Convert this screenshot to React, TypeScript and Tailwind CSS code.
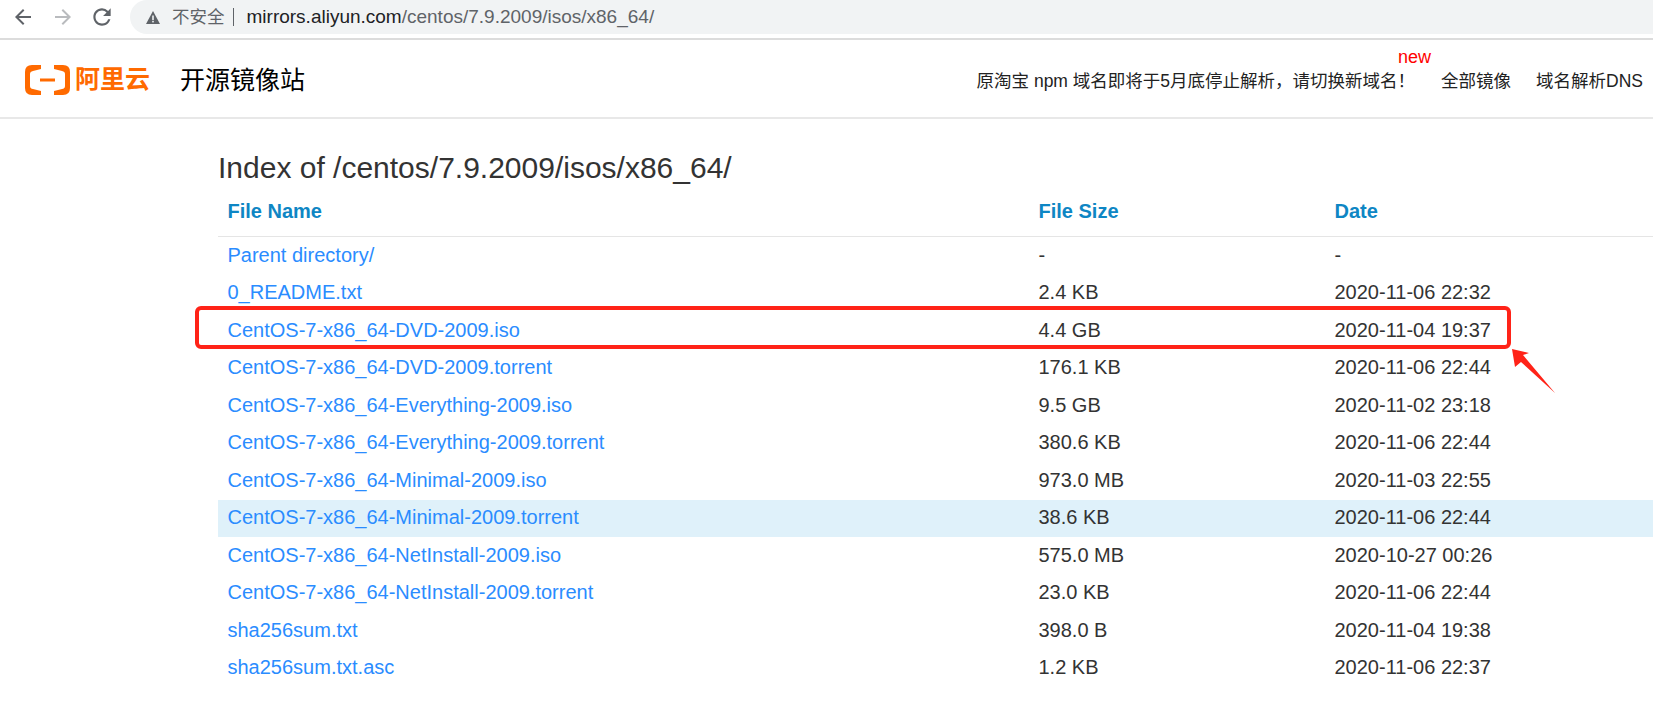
const files = [
  { name: "Parent directory/", size: "-", date: "-" },
  { name: "0_README.txt", size: "2.4 KB", date: "2020-11-06 22:32" },
  { name: "CentOS-7-x86_64-DVD-2009.iso", size: "4.4 GB", date: "2020-11-04 19:37" },
  { name: "CentOS-7-x86_64-DVD-2009.torrent", size: "176.1 KB", date: "2020-11-06 22:44" },
  { name: "CentOS-7-x86_64-Everything-2009.iso", size: "9.5 GB", date: "2020-11-02 23:18" },
  { name: "CentOS-7-x86_64-Everything-2009.torrent", size: "380.6 KB", date: "2020-11-06 22:44" },
  { name: "CentOS-7-x86_64-Minimal-2009.iso", size: "973.0 MB", date: "2020-11-03 22:55" },
  { name: "CentOS-7-x86_64-Minimal-2009.torrent", size: "38.6 KB", date: "2020-11-06 22:44", hover: true },
  { name: "CentOS-7-x86_64-NetInstall-2009.iso", size: "575.0 MB", date: "2020-10-27 00:26" },
  { name: "CentOS-7-x86_64-NetInstall-2009.torrent", size: "23.0 KB", date: "2020-11-06 22:44" },
  { name: "sha256sum.txt", size: "398.0 B", date: "2020-11-04 19:38" },
  { name: "sha256sum.txt.asc", size: "1.2 KB", date: "2020-11-06 22:37" },
];

function AliyunLogo() {
  return (
    <svg width="45" height="30" viewBox="0 0 45 30" className="shrink-0">
      <path d="M16 0H7Q0 0 0 7V23Q0 30 7 30H16V26L8 24Q5 23.500 5 21V9Q5 6.500 8 6L16 4Z" fill="#ff6a00" />
      <path d="M29 0H38Q45 0 45 7V23Q45 30 38 30H29V26L37 24Q40 23.500 40 21V9Q40 6.500 37 6L29 4Z" fill="#ff6a00" />
      <rect x="15" y="13.500" width="15" height="3" fill="#ff6a00" />
    </svg>
  );
}

export default function App() {
  return (
    <div className="h-[726px] w-[1653px] overflow-hidden bg-white font-['Liberation_Sans','Noto_Sans_CJK_SC',sans-serif]">
      {/* Browser toolbar */}
      <div className="flex h-[40px] items-start border-b-2 border-[#dcdcdc] bg-white">
        <div className="flex h-[33px] w-[130px] items-center pl-[11px]">
          <svg width="24" height="24" viewBox="0 0 24 24" fill="#5f6368">
            <path d="M20 11H7.830l5.590-5.590L12 4l-8 8 8 8 1.410-1.410L7.830 13H20v-2z" />
          </svg>
          <svg width="24" height="24" viewBox="0 0 24 24" fill="#b9bbbe" className="ml-[16px]">
            <path d="M4 11h12.170l-5.590-5.590L12 4l8 8-8 8-1.410-1.410L16.170 13H4v-2z" />
          </svg>
          <svg width="26" height="26" viewBox="0 0 24 24" fill="#5f6368" className="ml-[14px]">
            <path d="M17.650 6.350A7.958 7.958 0 0012 4c-4.420 0-7.990 3.580-7.990 8s3.570 8 7.990 8c3.730 0 6.840-2.550 7.730-6h-2.080A5.990 5.990 0 0112 18c-3.310 0-6-2.690-6-6s2.690-6 6-6c1.660 0 3.140.690 4.220 1.780L13 11h7V4l-2.350 2.350z" />
          </svg>
        </div>
        <div className="flex h-[34px] flex-1 items-center rounded-l-[17px] bg-[#f1f3f4] pl-[16px]">
          <svg width="14" height="13" viewBox="0 0 14 13" className="shrink-0">
            <path d="M7 0L14 13H0Z" fill="#5f6368" />
            <rect x="6.200" y="4.500" width="1.600" height="4.500" fill="#f1f3f4" />
            <rect x="6.200" y="9.800" width="1.600" height="1.600" fill="#f1f3f4" />
          </svg>
          <span className="ml-[12px] text-[17.5px] text-[#5f6368]">不安全</span>
          <span className="ml-[8px] h-[18px] w-px bg-[#5f6368]" />
          <span className="ml-[13px] text-[19px] text-[#202124]">mirrors.aliyun.com</span>
          <span className="text-[19px] text-[#5f6368]">/centos/7.9.2009/isos/x86_64/</span>
        </div>
      </div>

      {/* Site header */}
      <div className="flex h-[79px] items-center border-b-2 border-[#e8e8e8] pr-[10px]">
        <div className="mt-[2px] ml-[25px] flex items-center">
          <AliyunLogo />
          <span className="ml-[5px] text-[25px] leading-none font-bold text-[#ff6a00]">阿里云</span>
        </div>
        <span className="mt-[4px] ml-[30px] text-[25px] text-black">开源镜像站</span>
        <div className="mt-[6px] ml-auto flex items-center text-[17.5px] text-[#222]">
          <div className="relative">
            <span>原淘宝 npm 域名即将于5月底停止解析，请切换新域名！</span>
            <span className="absolute -top-[24px] right-[-16px] text-[18px] text-[#ff0000]">new</span>
          </div>
          <span className="ml-[26px]">全部镜像</span>
          <span className="ml-[25px]">域名解析DNS</span>
        </div>
      </div>

      {/* Directory listing */}
      <div className="pl-[218px]">
        <h1 className="pt-[31px] text-[30px] leading-[36px] text-[#333]">Index of /centos/7.9.2009/isos/x86_64/</h1>
        <div className="flex h-[51px] items-center border-b border-[#e5e5e5] pl-[9.5px] text-[20px] font-bold text-[#0e86c4]">
          <span className="w-[811px]">File Name</span>
          <span className="w-[296px]">File Size</span>
          <span>Date</span>
        </div>
        <div className="relative">
          {files.map((f) => (
            <div
              key={f.name}
              className={`flex h-[37.5px] items-center pb-[2px] pl-[9.5px] text-[20px] text-[#333] ${f.hover ? "bg-[#dff1fa]" : ""}`}
            >
              <span className="w-[811px] text-[#2a8cff]">{f.name}</span>
              <span className="w-[296px]">{f.size}</span>
              <span>{f.date}</span>
            </div>
          ))}
          {/* Red annotation */}
          <div className="absolute top-[69px] -left-[23px] h-[43px] w-[1316px] rounded-[6px] border-[4px] border-[#ff2318]" />
          <svg width="46" height="46" viewBox="0 0 46 46" className="absolute top-[112px] left-[1293px]">
            <path d="M1 0L18 4L12 6L44 44L10 13L4 18Z" fill="#ff2318" />
          </svg>
        </div>
      </div>
    </div>
  );
}
